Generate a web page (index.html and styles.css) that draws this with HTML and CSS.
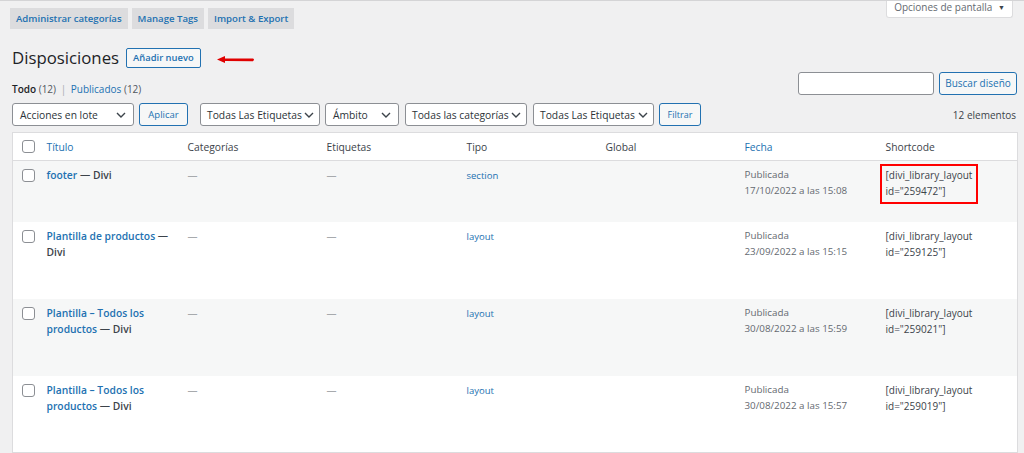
FILE: index.html
```html
<!DOCTYPE html>
<html lang="es">
<head>
<meta charset="utf-8">
<title>Disposiciones</title>
<link rel="stylesheet" href="styles.css">
</head>
<body>
<div class="screen-options">Opciones de pantalla <span class="tri">▼</span></div>
<div class="wrap">
  <nav class="tabs">
    <a class="tab">Administrar categorías</a>
    <a class="tab">Manage Tags</a>
    <a class="tab">Import &amp; Export</a>
  </nav>
  <div class="heading-row">
    <h1 class="title">Disposiciones</h1>
    <a class="btn-add">Añadir nuevo</a>
    <svg class="arrow" width="40" height="10" viewBox="0 0 40 10"><path d="M1 4.5 L9 1 L9 3.4 L37 3.6 Q39 4.5 37 6.2 L9 6 L9 8 Z" fill="#e00000"/></svg>
  </div>
  <div class="sub-row">
    <div class="subsubsub"><b>Todo</b> <span class="count">(12)</span> <span class="sep">|</span> <a>Publicados</a> <span class="count">(12)</span></div>
    <div class="search">
      <div class="search-input"></div>
      <a class="btn-secondary btn-search">Buscar diseño</a>
    </div>
  </div>
  <div class="filter-row">
    <div class="filters">
      <div class="select w-bulk"><span>Acciones en lote</span><svg width="10" height="6" viewBox="0 0 10 6"><path d="M1 1 L5 5 L9 1" fill="none" stroke="#3c434a" stroke-width="1.4"/></svg></div>
      <a class="btn-secondary btn-apply">Aplicar</a>
      <div class="select w-tags gap-l"><span>Todas Las Etiquetas</span><svg width="10" height="6" viewBox="0 0 10 6"><path d="M1 1 L5 5 L9 1" fill="none" stroke="#3c434a" stroke-width="1.4"/></svg></div>
      <div class="select w-scope"><span>Ámbito</span><svg width="10" height="6" viewBox="0 0 10 6"><path d="M1 1 L5 5 L9 1" fill="none" stroke="#3c434a" stroke-width="1.4"/></svg></div>
      <div class="select w-cats"><span>Todas las categorías</span><svg width="10" height="6" viewBox="0 0 10 6"><path d="M1 1 L5 5 L9 1" fill="none" stroke="#3c434a" stroke-width="1.4"/></svg></div>
      <div class="select w-tags2"><span>Todas Las Etiquetas</span><svg width="10" height="6" viewBox="0 0 10 6"><path d="M1 1 L5 5 L9 1" fill="none" stroke="#3c434a" stroke-width="1.4"/></svg></div>
      <a class="btn-secondary btn-filter">Filtrar</a>
    </div>
    <div class="items">12 elementos</div>
  </div>
  <table class="list">
    <colgroup>
      <col class="c-cb"><col class="c-title"><col class="c-cat"><col class="c-tag"><col class="c-type"><col class="c-global"><col class="c-date"><col class="c-sc">
    </colgroup>
    <thead>
      <tr>
        <th class="cb"><span class="checkbox"></span></th>
        <th class="link">Título</th>
        <th>Categorías</th>
        <th>Etiquetas</th>
        <th>Tipo</th>
        <th>Global</th>
        <th class="link">Fecha</th>
        <th>Shortcode</th>
      </tr>
    </thead>
    <tbody>
      <tr class="alt r-short">
        <td class="cb"><span class="checkbox"></span></td>
        <td class="t"><a>footer</a> <span class="state">— Divi</span></td>
        <td class="dash">—</td>
        <td class="dash">—</td>
        <td class="type"><a>section</a></td>
        <td></td>
        <td class="date">Publicada<br>17/10/2022 a las 15:08</td>
        <td class="sc"><span class="highlight">[divi_library_layout<br>id="259472"]</span></td>
      </tr>
      <tr class="r-tall">
        <td class="cb"><span class="checkbox"></span></td>
        <td class="t"><a>Plantilla de productos</a> <span class="state">—<br>Divi</span></td>
        <td class="dash">—</td>
        <td class="dash">—</td>
        <td class="type"><a>layout</a></td>
        <td></td>
        <td class="date">Publicada<br>23/09/2022 a las 15:15</td>
        <td class="sc">[divi_library_layout<br>id="259125"]</td>
      </tr>
      <tr class="alt r-tall">
        <td class="cb"><span class="checkbox"></span></td>
        <td class="t"><a>Plantilla – Todos los<br>productos</a> <span class="state">— Divi</span></td>
        <td class="dash">—</td>
        <td class="dash">—</td>
        <td class="type"><a>layout</a></td>
        <td></td>
        <td class="date">Publicada<br>30/08/2022 a las 15:59</td>
        <td class="sc">[divi_library_layout<br>id="259021"]</td>
      </tr>
      <tr class="r-tall">
        <td class="cb"><span class="checkbox"></span></td>
        <td class="t"><a>Plantilla – Todos los<br>productos</a> <span class="state">— Divi</span></td>
        <td class="dash">—</td>
        <td class="dash">—</td>
        <td class="type"><a>layout</a></td>
        <td></td>
        <td class="date">Publicada<br>30/08/2022 a las 15:57</td>
        <td class="sc">[divi_library_layout<br>id="259019"]</td>
      </tr>
    </tbody>
  </table>
</div>
</body>
</html>
```
FILE: styles.css
```css
* { box-sizing: border-box; }
html, body { margin: 0; padding: 0; }
body {
  background: #f0f0f1;
  border-top: 1px solid #d4d4d6;
  font-family: "Open Sans", "Noto Sans", sans-serif;
  color: #3c434a;
  font-size: 10px;
  position: relative;
  height: 453px;
  overflow: hidden;
}
a { color: #2271b1; text-decoration: none; }

.screen-options {
  position: absolute;
  top: -1px;
  right: 11px;
  width: 127px;
  height: 18px;
  background: #fff;
  border: 1px solid #dcdcde;
  border-top: none;
  border-radius: 0 0 3px 3px;
  font-size: 10px;
  color: #646970;
  text-align: center;
  line-height: 15px;
}
.screen-options .tri { font-size: 7px; color: #3c434a; margin-left: 3px; vertical-align: 1px; }

.wrap { padding: 0 7px 0 12px; }

.tabs { display: flex; gap: 4px; margin-top: 7px; margin-left: -2px; }
.tab {
  display: block;
  height: 21px;
  line-height: 21px;
  padding: 0 6px;
  background: #dcdcde;
  color: #2271b1;
  font-weight: 600;
  font-size: 9.6px;
  white-space: nowrap;
}

.heading-row { display: flex; align-items: center; margin-top: 19px; height: 20px; }
.title {
  margin: 0;
  font-size: 16.8px;
  font-weight: 400;
  color: #1d2327;
  line-height: 20px;
}
.btn-add {
  margin-left: 7px;
  height: 20px;
  line-height: 18px;
  padding: 0 6px;
  border: 1px solid #2271b1;
  border-radius: 2px;
  background: #f6f7f7;
  font-size: 9.4px;
  font-weight: 600;
  white-space: nowrap;
}
.arrow { margin-left: 15px; margin-top: 4px; }

.sub-row { display: flex; justify-content: space-between; align-items: flex-end; margin-top: 4px; }
.subsubsub { font-size: 10px; line-height: 14px; margin-bottom: -1px; color: #646970; }
.subsubsub b { color: #1d2327; font-weight: 600; }
.subsubsub .count { color: #50575e; }
.subsubsub .sep { color: #a7aaad; margin: 0 2px; }
.search { display: flex; gap: 5px; }
.search-input {
  width: 136px;
  height: 23px;
  background: #fff;
  border: 1px solid #8c8f94;
  border-radius: 3px;
}
.btn-secondary {
  display: block;
  height: 23px;
  line-height: 21px;
  padding: 0 7px;
  border: 1px solid #2271b1;
  border-radius: 3px;
  background: #f6f7f7;
  color: #2271b1;
  font-size: 10px;
  white-space: nowrap;
}
.btn-search { width: 78px; text-align: center; font-size: 10px; padding: 0; }

.filter-row { display: flex; justify-content: space-between; align-items: center; margin-top: 8px; height: 23px; }
.filters { display: flex; gap: 5px; align-items: center; }
.select {
  height: 23px;
  background: #fff;
  border: 1px solid #8c8f94;
  border-radius: 3px;
  display: flex;
  align-items: center;
  justify-content: space-between;
  padding: 0 7px 0 7px;
  font-size: 10.3px;
  color: #2c3338;
  white-space: nowrap;
}
.select svg { flex: none; }
.w-bulk { width: 122px; }
.btn-apply { width: 49px; text-align: center; font-size: 9.5px; padding: 0; }
.gap-l { margin-left: 7px; }
.w-tags { width: 120px; padding-left: 6px; padding-right: 5px; }
.w-scope { width: 74px; }
.w-cats { width: 122px; padding-left: 6px; padding-right: 5px; margin-left: 1px; }
.w-tags2 { width: 121px; padding-left: 6px; padding-right: 5px; margin-left: 1px; }
.btn-filter { width: 42px; text-align: center; font-size: 9px; padding: 0; }
.items { font-size: 10px; color: #3c434a; margin-right: 1px; }

.list {
  margin-top: 6px;
  width: 1005px;
  border-collapse: collapse;
  table-layout: fixed;
  border: 1px solid #dcdcde;
  background: #fff;
}
.c-cb { width: 28px; }
.c-title { width: 141px; }
.c-cat { width: 139px; }
.c-tag { width: 140px; }
.c-type { width: 139px; }
.c-global { width: 139px; }
.c-date { width: 141px; }
.c-sc { width: 138px; }

.list th {
  text-align: left;
  font-weight: 400;
  font-size: 10.3px;
  color: #3c434a;
  height: 28px;
  padding: 0 6px;
  border-bottom: 1px solid #dcdcde;
  vertical-align: middle;
}
.list th.link { color: #2271b1; }
.list td {
  vertical-align: top;
  padding: 6px 6px 0 6px;
  font-size: 10px;
  line-height: 16px;
  color: #50575e;
}
.list th.cb, .list td.cb { padding: 0 0 0 9px; }
.list td.cb { padding-top: 8px; }
.checkbox {
  display: block;
  width: 13px;
  height: 13px;
  border: 1px solid #8c8f94;
  border-radius: 3px;
  background: #fff;
}
tr.alt td { background: #f6f7f7; }
tr.r-short td { height: 61px; }
tr.r-tall td { height: 77px; }
td.t { font-weight: 600; font-size: 10.3px; color: #2271b1; }
td.t a { color: #2271b1; }
td.t .state { color: #3c434a; }
td.dash { color: #a7aaad; }
td.type a { font-size: 9.5px; color: #2271b1; }
td.date { color: #646970; font-size: 9.8px; }
td.sc { color: #3c434a; font-size: 10px; }
.highlight {
  display: inline-block;
  outline: 2px solid #ff0000;
  margin-left: -4px;
  padding: 1px 4px 3px 4px;
  margin-top: -1px;
}
```
